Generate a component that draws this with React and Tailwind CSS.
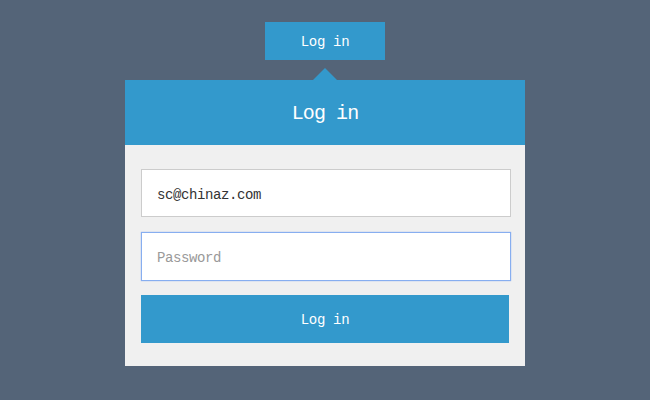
import React from "react";

const mono = { fontFamily: '"Liberation Mono", "DejaVu Sans Mono", monospace' };

export default function App() {
  return (
    <div className="w-[650px] h-[400px] bg-[#546478] flex flex-col items-center pt-[22px]" style={mono}>
      {/* Toggle button */}
      <button className="w-[120px] h-[38px] pt-[2px] bg-[#3399cc] text-white text-[14px] tracking-[-0.3px]">
        Log in
      </button>

      {/* Arrow */}
      <div className="mt-[8px] w-0 h-0 border-l-[12px] border-r-[12px] border-b-[12px] border-l-transparent border-r-transparent border-b-[#3399cc]" />

      {/* Card */}
      <div className="w-[400px] bg-[#f0f0f0]">
        <div className="h-[65px] pt-[2px] bg-[#3399cc] flex items-center justify-center text-white text-[20px] tracking-[-0.9px]">
          Log in
        </div>
        <div className="px-[16px] pt-[24px] pb-[23px] flex flex-col">
          <input
            readOnly
            value="sc@chinaz.com"
            className="w-[370px] h-[48px] bg-white border border-[#cccccc] pl-[15px] pt-[3px] text-[14px] tracking-[-0.4px] text-[#333333] outline-none"
            style={mono}
          />
          <input
            readOnly
            placeholder="Password"
            className="mt-[15px] w-[370px] h-[49px] bg-white border border-[#87aef0] shadow-[0_0_1px_#87aef0] pl-[15px] pt-[3px] text-[14px] tracking-[-0.4px] text-[#333333] placeholder:text-[#999999] outline-none"
            style={mono}
          />
          <button className="mt-[14px] w-[368px] h-[48px] pt-[3px] bg-[#3399cc] text-white text-[14px] tracking-[-0.3px]">
            Log in
          </button>
        </div>
      </div>
    </div>
  );
}
